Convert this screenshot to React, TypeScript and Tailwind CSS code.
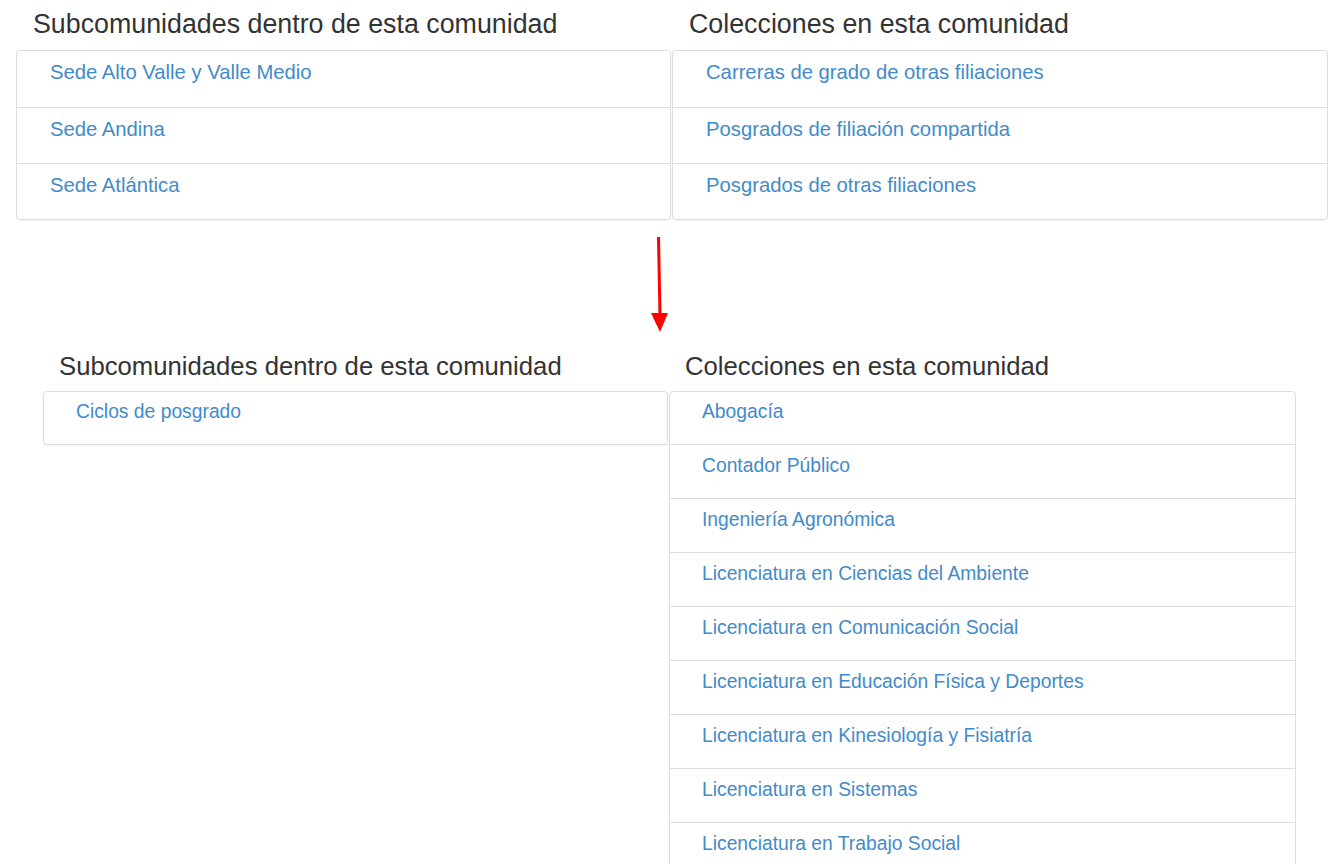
import React from "react";

const font = { fontFamily: '"Liberation Sans", Arial, sans-serif' };

function Panel({ items, big }: { items: string[]; big: boolean }) {
  return (
    <div className="border border-[#dddddd] rounded-[4px] bg-white shadow-[0_1px_1px_rgba(0,0,0,0.05)] overflow-hidden">
      {items.map((t, i) => (
        <div
          key={t}
          className={
            big
              ? i === 0
                ? "h-[56px] pt-[7px] pl-[33px]"
                : "h-[56px] pt-[7px] pl-[33px] border-t border-[#dddddd]"
              : i === 0
              ? "h-[52px] pt-[7px] pl-[32px]"
              : "h-[54px] pt-[8px] pl-[32px] border-t border-[#dddddd]"
          }
        >
          <a
            className={
              big
                ? "text-[20.25px] leading-[28px] text-[#428bca]"
                : "text-[19.3px] leading-[26px] text-[#428bca]"
            }
          >
            {t}
          </a>
        </div>
      ))}
    </div>
  );
}

export default function App() {
  return (
    <div className="w-[1330px] h-[864px] overflow-hidden bg-white" style={font}>
      {/* top section */}
      <div className="grid grid-cols-[655px_656px] gap-[1px] pl-[16px]">
        <div>
          <h3 className="pt-[9px] px-[17px] text-[26.8px] leading-[30px] text-[#333333]">
            Subcomunidades dentro de esta comunidad
          </h3>
          <div className="mt-[11px]">
            <Panel big items={["Sede Alto Valle y Valle Medio", "Sede Andina", "Sede Atlántica"]} />
          </div>
        </div>
        <div>
          <h3 className="pt-[9px] px-[17px] text-[26.8px] leading-[30px] text-[#333333]">
            Colecciones en esta comunidad
          </h3>
          <div className="mt-[11px]">
            <Panel
              big
              items={[
                "Carreras de grado de otras filiaciones",
                "Posgrados de filiación compartida",
                "Posgrados de otras filiaciones",
              ]}
            />
          </div>
        </div>
      </div>

      {/* arrow */}
      <div className="h-[132px] pl-[648px] pt-[16px]">
        <svg width="24" height="100" viewBox="0 0 24 100">
          <line x1="10.5" y1="1" x2="12" y2="80" stroke="#ff0000" strokeWidth="3" />
          <polygon points="3,77 20,77 12,96" fill="#ff0000" />
        </svg>
      </div>

      {/* bottom section */}
      <div className="grid grid-cols-[625px_627px] gap-[1px] pl-[43px]">
        <div>
          <h3 className="px-[16px] text-[25.7px] leading-[29px] text-[#333333]">
            Subcomunidades dentro de esta comunidad
          </h3>
          <div className="mt-[10px]">
            <Panel big={false} items={["Ciclos de posgrado"]} />
          </div>
        </div>
        <div>
          <h3 className="px-[16px] text-[25.7px] leading-[29px] text-[#333333]">
            Colecciones en esta comunidad
          </h3>
          <div className="mt-[10px]">
            <Panel
              big={false}
              items={[
                "Abogacía",
                "Contador Público",
                "Ingeniería Agronómica",
                "Licenciatura en Ciencias del Ambiente",
                "Licenciatura en Comunicación Social",
                "Licenciatura en Educación Física y Deportes",
                "Licenciatura en Kinesiología y Fisiatría",
                "Licenciatura en Sistemas",
                "Licenciatura en Trabajo Social",
              ]}
            />
          </div>
        </div>
      </div>
    </div>
  );
}
